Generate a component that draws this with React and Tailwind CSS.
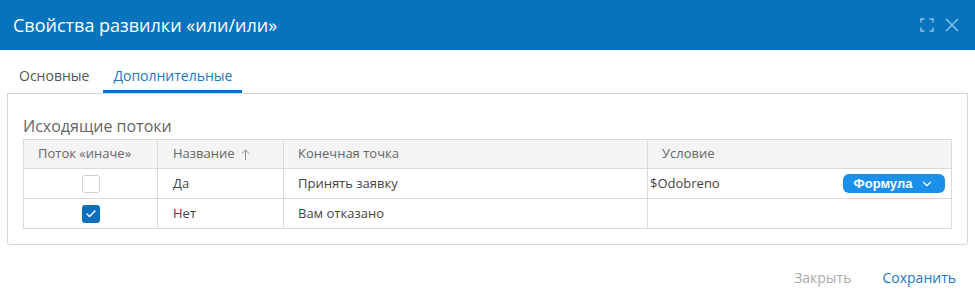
import { Check, ChevronDown } from "lucide-react";

const rows = [
    { other: false, name: "Да", target: "Принять заявку", cond: "$Odobreno" },
    { other: true, name: "Нет", target: "Вам отказано", cond: "" },
];

function Box({ checked }) {
    if (checked) {
        return (
            <span className="inline-flex w-[18px] h-[18px] rounded-[3px] bg-[#0a6fbd] items-center justify-center">
                <Check size={12} strokeWidth={3} color="white" />
            </span>
        );
    }
    return <span className="inline-block w-[18px] h-[18px] rounded-[3px] border border-[#d0d0d0] bg-white" />;
}

export default function App() {
    return (
        <div className="w-[975px] h-[297px] bg-white font-['Open_Sans',sans-serif] flex flex-col">
            <div className="h-[50px] bg-[#0673bd] flex items-center justify-between pl-[13px] pr-[16px]">
                <h1 className="text-white text-[18px] leading-none">Свойства развилки «или/или»</h1>
                <div className="flex items-center gap-[11px] text-[#8fbfe3]">
                    <svg width="14" height="14" viewBox="0 0 14 14" fill="none" stroke="currentColor" strokeWidth="1.5">
                        <path d="M1 4.5V1h3.5M9.5 1H13v3.5M13 9.5V13H9.5M4.5 13H1V9.5" />
                    </svg>
                    <svg width="14" height="14" viewBox="0 0 14 14" fill="none" stroke="currentColor" strokeWidth="1.5">
                        <path d="M1 1l12 12M13 1L1 13" />
                    </svg>
                </div>
            </div>

            <div className="flex pl-[9px] pt-[15px]">
                <div className="px-[10px] h-[28px] text-[14px] text-[#555] leading-[22px]">Основные</div>
                <div className="ml-[4px] px-[10px] h-[28px] text-[14px] text-[#1a78c2] leading-[22px] border-b-[3px] border-[#0a6fbd]">Дополнительные</div>
            </div>

            <div className="mx-[7px] border border-[#d6d6d6] rounded-b-[3px] px-[15px] pt-[21px] pb-[15px]">
                <div className="text-[16px] text-[#666] leading-[22px] mb-[2px]">Исходящие потоки</div>
                <table className="w-[928px] border-collapse table-fixed text-[13px]">
                    <colgroup>
                        <col className="w-[134px]" />
                        <col className="w-[126px]" />
                        <col className="w-[364px]" />
                        <col className="w-[304px]" />
                    </colgroup>
                    <thead>
                        <tr className="bg-[#f4f4f4] h-[29px] text-[#666]">
                            <th className="border border-[#d9d9d9] font-normal text-left pl-[14px]">Поток «иначе»</th>
                            <th className="border border-[#d9d9d9] font-normal text-left pl-[15px]">
                                <span className="inline-flex items-center gap-[6px]">
                                    Название
                                    <svg width="9" height="11" viewBox="0 0 9 11" fill="none" stroke="#888" strokeWidth="1">
                                        <path d="M4.5 11V1M0.8 4.7L4.5 1l3.7 3.7" />
                                    </svg>
                                </span>
                            </th>
                            <th className="border border-[#d9d9d9] font-normal text-left pl-[14px]">Конечная точка</th>
                            <th className="border border-[#d9d9d9] font-normal text-left pl-[14px]">Условие</th>
                        </tr>
                    </thead>
                    <tbody className="text-[#444]">
                        {rows.map(r => (
                            <tr key={r.name} className="h-[30px]">
                                <td className="border border-[#d9d9d9] text-center align-middle">
                                    <div className="flex justify-center"><Box checked={r.other} /></div>
                                </td>
                                <td className="border border-[#d9d9d9] pl-[15px]">{r.name}</td>
                                <td className="border border-[#d9d9d9] pl-[14px]">{r.target}</td>
                                <td className="border border-[#d9d9d9] pl-[2px] pr-[6px]">
                                    {r.cond && (
                                        <div className="flex items-center justify-between">
                                            <span>{r.cond}</span>
                                            <span className="h-[19px] w-[102px] rounded-[6px] bg-[#1a90ea] text-white font-['Liberation_Sans',sans-serif] font-bold text-[13px] flex items-center justify-center gap-[8px]">
                                                Формула
                                                <ChevronDown size={14} strokeWidth={2} />
                                            </span>
                                        </div>
                                    )}
                                </td>
                            </tr>
                        ))}
                    </tbody>
                </table>
            </div>

            <div className="flex justify-end gap-[31px] pr-[19px] pt-[22px] text-[14px]">
                <span className="text-[#aaa]">Закрыть</span>
                <span className="text-[#1a78c2]">Сохранить</span>
            </div>
        </div>
    );
}
